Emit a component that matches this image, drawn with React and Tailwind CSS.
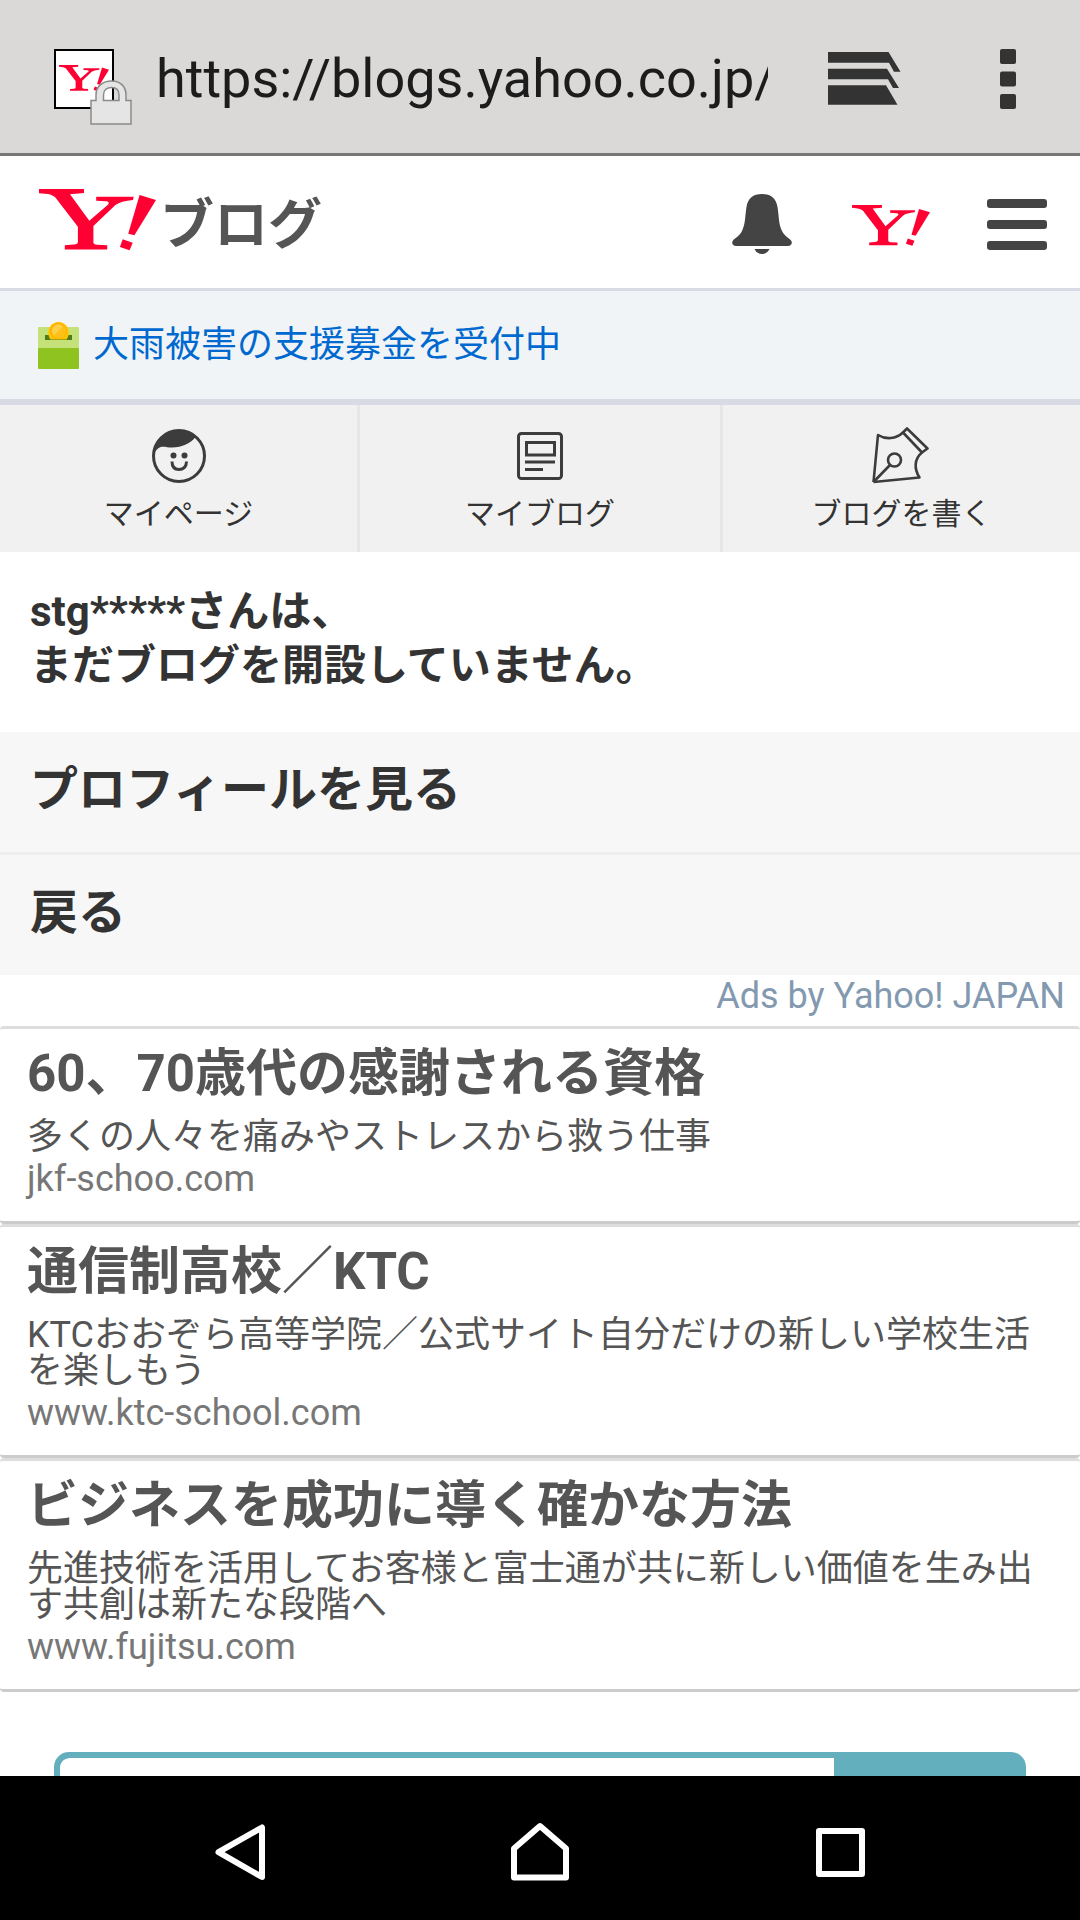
import clsx from 'clsx';

const ADS = [
  {
    id: 1,
    title: '60、70歳代の感謝される資格',
    text: '多くの人々を痛みやストレスから救う仕事',
    host: 'jkf-schoo.com',
  },
  {
    id: 2,
    title: '通信制高校／KTC',
    text: 'KTCおおぞら高等学院／公式サイト自分だけの新しい学校生活を楽しもう',
    host: 'www.ktc-school.com',
  },
  {
    id: 3,
    title: 'ビジネスを成功に導く確かな方法',
    text: '先進技術を活用してお客様と富士通が共に新しい価値を生み出す共創は新たな段階へ',
    host: 'www.fujitsu.com',
  },
];

const MENU = [
  { label: 'マイページ', Icon: FaceIcon },
  { label: 'マイブログ', Icon: BlogIcon },
  { label: 'ブログを書く', Icon: PenIcon },
];

function YahooMark({ className }) {
  return (
    <svg viewBox="0 0 117 62" className={className} fill="#ff0033" aria-hidden="true">
      <path d="M0 0H45V4L31 5.3L50.3 31.7L69.2 15.4Q71 12.7 67 12.3L57.2 11.7V7.7H94.7L94 11Q82 12 76.4 16L54.4 37V53.5Q54.4 55.3 58.2 55.7L68.2 56.3V60.5H25.8V56.3L35 55.5Q38.9 55 38.9 53V37.7L16.2 8.3Q12.7 5 5.9 4.7L0 4.3Z" />
      <path d="M100.6 6L117 11L95.4 46.3L89.2 44.7Z" />
      <path d="M83.7 50.3L93.7 53.7L90.6 61.3L80.9 58Z" />
    </svg>
  );
}

function LockIcon({ className }) {
  return (
    <svg viewBox="0 0 42 45" className={className} aria-hidden="true">
      <path
        fillRule="evenodd"
        fill="#e5e5e5"
        stroke="#8a8a8a"
        strokeWidth="1.5"
        d="M1 20.5H6V15C6 6 13 1 21.5 1C30 1 36 6 36 15V20.5H41V44H1Z M13.5 20.5H29V15C29 10 26 7.5 21.5 7.5C17 7.5 13.5 10 13.5 15Z"
      />
    </svg>
  );
}

function TabsIcon() {
  return (
    <svg viewBox="0 0 73 53" className="h-[53px] w-[73px]" fill="#333333" aria-hidden="true">
      <path d="M0 0H60.5L72.5 19.7H66L61 10.7H0Z" />
      <path d="M0 16.7H59L71 36H65L60 27.3H0Z" />
      <path d="M0 33.3H58L69.5 52.7H0Z" />
    </svg>
  );
}

function DotsIcon() {
  return (
    <svg viewBox="0 0 16 60" className="h-[60px] w-4" fill="#333333" aria-hidden="true">
      <rect width="16" height="15" rx="2" />
      <rect y="22.5" width="16" height="15" rx="2" />
      <rect y="45" width="16" height="15" rx="2" />
    </svg>
  );
}

function BellIcon() {
  return (
    <svg viewBox="0 0 60 60" className="size-[60px]" fill="#444444" aria-hidden="true">
      <path d="M30 0C21 0 16 4 14.5 13C13 22 13.5 30 10 37C7 42.5 3 44 1 46.5C-1 49 1 52 4 52H56C59 52 61 49 59 46.5C57 44 53 42.5 50 37C46.5 30 47 22 45.5 13C44 4 39 0 30 0Z" />
      <path d="M22.5 55H37.5C36 58.5 33 60 30 60C27 60 24 58.5 22.5 55Z" />
    </svg>
  );
}

function HamburgerIcon() {
  return (
    <svg viewBox="0 0 60 51" className="h-[51px] w-[60px]" fill="#444444" aria-hidden="true">
      <rect width="60" height="9" rx="3" />
      <rect y="21" width="60" height="9" rx="3" />
      <rect y="42" width="60" height="9" rx="3" />
    </svg>
  );
}

function DonationIcon() {
  return (
    <svg viewBox="0 0 41 47" className="h-[47px] w-[41px]" aria-hidden="true">
      <rect y="5" width="41" height="22" rx="1" fill="#c5e17a" />
      <rect y="26" width="41" height="21" rx="1" fill="#8fc31f" />
      <rect x="7" y="13" width="27" height="5" fill="#4c7d1c" />
      <path d="M12.5 17.500C7 10 12 0 20.500 0C29 0 34 10 28.500 17.500Z" fill="#ffc400" />
      <circle cx="20.5" cy="9" r="7.5" fill="#ffcf45" stroke="#ffae00" strokeWidth="1.5" />
      <path d="M15 14.300L25.800 3.700A7.500 7.500 0 0 1 15 14.300Z" fill="#ffc018" />
    </svg>
  );
}

function FaceIcon() {
  return (
    <svg viewBox="0 0 54 54" className="size-[54px]" fill="none" stroke="#3c3c3c" aria-hidden="true">
      <circle cx="27" cy="27" r="25.5" strokeWidth="3" />
      <path d="M2 24C3 10 14 1 27 1C33 1 39 3.5 43.5 8C39 14 30 18.5 20 18.5C14 18.5 9 16 5.5 20C4 21.5 3 23 2 24Z" fill="#3c3c3c" stroke="none" />
      <circle cx="21.5" cy="26.5" r="3" fill="#3c3c3c" stroke="none" />
      <circle cx="32.5" cy="26.5" r="3" fill="#3c3c3c" stroke="none" />
      <path d="M20 32.5C20 38 23 40.5 27 40.5C31 40.5 34.5 38 34.5 32.5" strokeWidth="3" />
    </svg>
  );
}

function BlogIcon() {
  return (
    <svg viewBox="0 0 46 48" className="h-12 w-[46px]" fill="none" stroke="#3c3c3c" strokeWidth="3" aria-hidden="true">
      <rect x="1.5" y="1.5" width="43" height="45" rx="3" />
      <rect x="9.5" y="10.5" width="28" height="12.5" />
      <path d="M8 30H38M8 37.5H26" />
    </svg>
  );
}

function PenIcon() {
  return (
    <svg viewBox="0 0 62 57" className="h-[57px] w-[62px]" fill="none" stroke="#3c3c3c" strokeWidth="2.6" strokeLinejoin="round" aria-hidden="true">
      <path d="M2.5 55L7 8C15 13 25 12 32 5.5M51 25.500C43 32 43 42 48.500 50.500L2.5 55" />
      <path d="M32 5.500L36 1.500L56.500 21.500L51 25.500Z" />
      <circle cx="23.500" cy="33" r="6.500" />
      <path d="M2.5 55L19 38" />
    </svg>
  );
}

function BrowserBar() {
  return (
    <div className="flex h-[156px] shrink-0 items-center border-b-3 border-[#777776] bg-[#dad9d7] pt-1 pr-16 pl-[54px]">
      <div className="relative flex size-[60px] items-center justify-center border-2 border-black bg-white">
        <YahooMark className="w-[50px]" />
        <LockIcon className="absolute top-[29px] left-[34px] h-[45px] w-[42px]" />
      </div>
      <input
        type="text"
        aria-label="URL"
        defaultValue="https://blogs.yahoo.co.jp/"
        className="ml-[42px] min-w-0 flex-1 bg-transparent text-[54px] leading-[66px] text-[#1c1c1c] outline-none"
      />
      <button type="button" aria-label="タブ" className="ml-[60px]">
        <TabsIcon />
      </button>
      <button type="button" aria-label="メニュー" className="ml-[99px]">
        <DotsIcon />
      </button>
    </div>
  );
}

function SiteHeader() {
  return (
    <header className="flex h-[135px] items-center border-b-3 border-[#d8dbe3] pt-1 pr-[33px] pl-[39px]">
      <a href="#" className="flex items-center gap-1 text-[54px] leading-[66px] font-bold text-[#555555]">
        <YahooMark className="mb-2 w-[117px]" />
        <span className="pt-1">ブログ</span>
      </a>
      <div className="ml-auto flex items-center">
        <button type="button" aria-label="お知らせ">
          <BellIcon />
        </button>
        <a href="#" aria-label="Yahoo! JAPAN" className="ml-[60px] pt-1">
          <YahooMark className="w-[78px]" />
        </a>
        <button type="button" aria-label="サイトメニュー" className="ml-[57px]">
          <HamburgerIcon />
        </button>
      </div>
    </header>
  );
}

function AdItem({ ad }) {
  return (
    <li className="rounded-[4px] border-t-3 border-b-3 border-t-[#dddddd] border-b-[#cccccc]">
      <a href="#" className="block px-[27px] pt-[15px] pb-6">
        <h2 className="text-[51px] leading-[60px] font-bold text-[#555555]">{ad.title}</h2>
        <p className="mt-[15px] text-4xl leading-9 text-[#555555]">{ad.text}</p>
        <p className="mt-1.5 text-4xl leading-9 text-[#777777]">{ad.host}</p>
      </a>
    </li>
  );
}

export default function App() {
  return (
    <div lang="ja" className="flex h-screen flex-col bg-white font-[Roboto,'Noto_Sans_CJK_JP',sans-serif]">
      <BrowserBar />

      {/* Page content, cut off by the system navigation bar */}
      <main className="min-h-0 flex-1 overflow-hidden">
        <SiteHeader />

        <a
          href="#"
          className="flex h-[114px] items-center gap-3.5 border-b-6 border-[#d8dbe3] bg-[#f0f4f7] px-[38px] text-4xl text-[#0069cf]"
        >
          <DonationIcon />
          大雨被害の支援募金を受付中
        </a>

        <nav className="grid grid-cols-3 bg-[#f1f1f1]">
          {MENU.map(({ label, Icon }, i) => (
            <a
              key={label}
              href="#"
              className={clsx(
                'flex flex-col items-center pt-[22px] pb-[17px] text-3xl leading-[42px] text-[#333333]',
                i === 0 && 'border-r-3 border-[#e6e6e6]',
                i === 2 && 'border-l-3 border-[#e6e6e6]'
              )}
            >
              <span className="mb-[9px] flex h-[57px] items-center">
                <Icon />
              </span>
              {label}
            </a>
          ))}
        </nav>

        <h1 className="px-[30px] pt-[33px] pb-[39px] text-[42px] leading-[54px] font-bold text-[#333333]">
          stg*****さんは、
          <br />
          まだブログを開設していません。
        </h1>

        <div className="divide-y-3 divide-[#eeeeee] bg-[#f7f7f7] text-5xl font-bold text-[#333333]">
          <a href="#" className="flex h-[123px] items-center px-[30px] pb-1">プロフィールを見る</a>
          <a href="#" className="flex h-[120px] items-center px-[30px] pb-1">戻る</a>
        </div>

        {/* Ads */}
        <section>
          <p className="px-[15px] pb-[9px] text-right text-4xl leading-[42px]">
            <a href="#" className="text-[#8299b0]">Ads by Yahoo! JAPAN</a>
          </p>
          <ul>
            {ADS.map((ad) => (
              <AdItem key={ad.id} ad={ad} />
            ))}
          </ul>
        </section>

        <form className="mx-[54px] mt-[60px] flex h-[90px] overflow-hidden rounded-[15px] border-6 border-[#64afbe] bg-[#64afbe]">
          <input type="search" aria-label="検索" className="min-w-0 flex-1 rounded-l-[9px] bg-white px-4 text-4xl outline-none" />
          <button type="button" aria-label="検索する" className="w-[186px] shrink-0" />
        </form>
      </main>

      {/* System navigation */}
      <div className="flex h-36 shrink-0 items-center justify-center gap-60 bg-black pt-2">
        <button type="button" aria-label="戻る">
          <svg viewBox="0 0 60 60" className="size-[60px]" fill="none" stroke="#ffffff" strokeWidth="6" strokeLinejoin="round">
            <path d="M52 5.5V55L8.5 30.2Z" />
          </svg>
        </button>
        <button type="button" aria-label="ホーム">
          <svg viewBox="0 0 60 60" className="size-[60px]" fill="none" stroke="#ffffff" strokeWidth="6" strokeLinejoin="round">
            <path d="M4 26.5L30 4L56 26.5V55.5H4Z" />
          </svg>
        </button>
        <button type="button" aria-label="アプリ履歴">
          <svg viewBox="0 0 60 60" className="size-[60px]" fill="none" stroke="#ffffff" strokeWidth="6" strokeLinejoin="round">
            <path d="M9 9H52V52H9Z" />
          </svg>
        </button>
      </div>
    </div>
  );
}
